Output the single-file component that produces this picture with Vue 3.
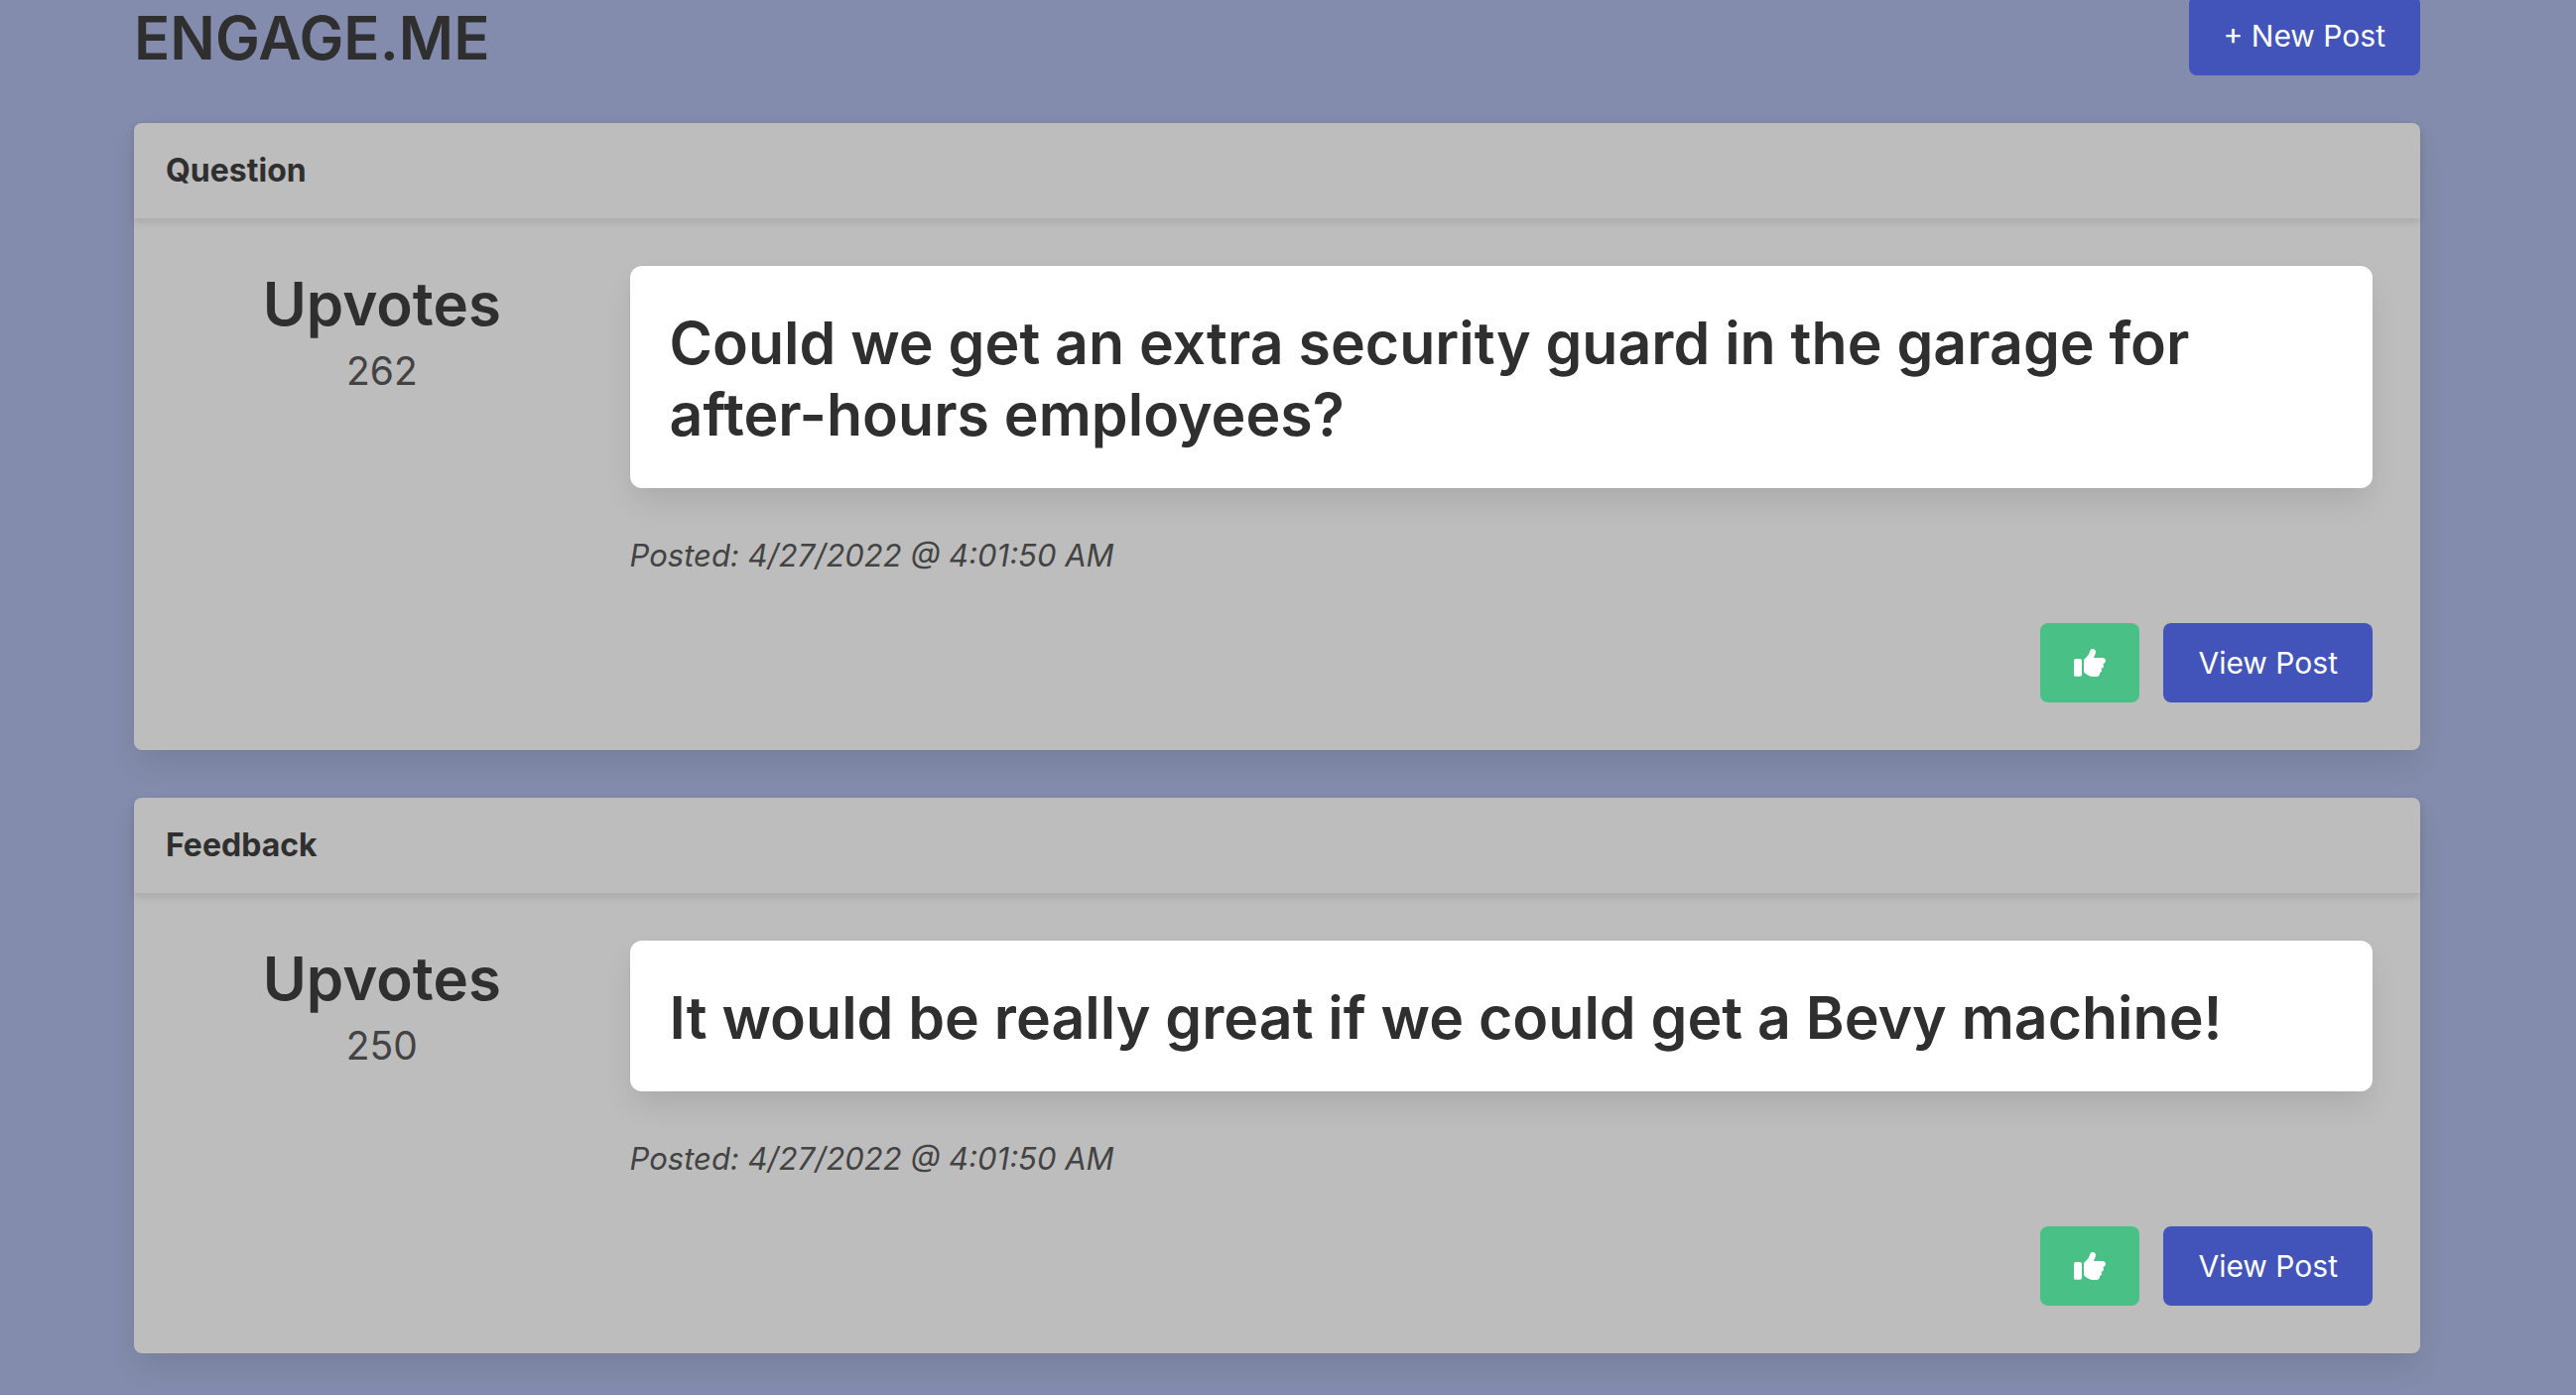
<script setup>
import { ref } from 'vue'

const posts = ref([
  {
    id: 1,
    type: 'Question',
    votes: 262,
    title: 'Could we get an extra security guard in the garage for after-hours employees?',
    posted: '4/27/2022 @ 4:01:50 AM'
  },
  {
    id: 2,
    type: 'Feedback',
    votes: 250,
    title: 'It would be really great if we could get a Bevy machine!',
    posted: '4/27/2022 @ 4:01:50 AM'
  }
])
</script>

<template>
  <main class="page">
    <div class="container">
      <header class="topbar">
        <h1 class="heading">ENGAGE.ME</h1>
        <button class="button primary" type="button">+ New Post</button>
      </header>

      <article v-for="post in posts" :key="post.id" class="card">
        <header class="card-header">{{ post.type }}</header>
        <div class="card-content">
          <section class="votes">
            <h2 class="heading">Upvotes</h2>
            <p class="count">{{ post.votes }}</p>
          </section>
          <section class="body">
            <div class="box">
              <h2 class="heading title">{{ post.title }}</h2>
            </div>
            <p class="posted">Posted: {{ post.posted }}</p>
            <div class="actions">
              <button class="button success" type="button" aria-label="Upvote" @click="post.votes++">
                <svg class="icon" viewBox="0 0 512 512" aria-hidden="true">
                  <path d="M128 447.1V223.1c0-17.67-14.33-31.1-32-31.1H32c-17.67 0-32 14.33-32 31.1v223.1c0 17.67 14.33 31.1 32 31.1h64C113.7 479.1 128 465.6 128 447.1zM512 224.1c0-26.5-21.48-47.98-48-47.98h-146.5c22.77-37.91 34.52-80.88 34.52-96.02C352 56.52 333.5 32 302.5 32c-63.13 0-26.36 76.15-108.2 141.6L178 186.6C166.2 196.1 160.2 210 160.1 224c-.0234 .0234 0 0 0 0L160 384c0 15.1 7.113 29.33 19.2 38.39l34.14 25.59C241 468.8 274.7 480 309.3 480H368c26.52 0 48-21.47 48-47.98c0-3.635-.4805-7.143-1.246-10.55C434 415.2 448 397.4 448 376c0-9.148-2.697-17.61-7.139-24.88C463.1 347 480 327.5 480 304.1c0-12.5-4.893-23.78-12.72-32.32C492.2 270.1 512 249.5 512 224.1z" />
                </svg>
              </button>
              <button class="button primary" type="button">View Post</button>
            </div>
          </section>
        </div>
      </article>
    </div>
  </main>
</template>

<style>
body {
  background: #848cad;
}
</style>

<style scoped>
.page {
  box-sizing: border-box;
  min-height: 100vh;
  padding-right: 22px;
  overflow: hidden;
  background: #848cad;
  color: #434343;
  font-family: Inter, "Liberation Sans", sans-serif;
  font-size: 32px;
  line-height: 48px;
}

.container {
  width: 90%;
  max-width: 2304px;
  margin: -4px auto 40px;
}

.topbar {
  display: flex;
  align-items: center;
  justify-content: space-between;
}

.heading {
  margin: 0 0 -2px;
  padding-top: 2px;
  color: #2f2f2f;
  font-size: 60px;
  font-weight: 600;
  line-height: 72px;
}

.title {
  font-size: 59px;
}

.button {
  display: inline-flex;
  align-items: center;
  justify-content: center;
  height: 80px;
  padding: 0 35px;
  border: 0;
  border-radius: 8px;
  color: #fff;
  font: inherit;
  font-size: 30px;
  cursor: pointer;
}

.primary {
  background: #4254ba;
}

.success {
  padding: 0 34px;
  background: #48c086;
}

.icon {
  width: 32px;
  height: 32px;
  fill: currentColor;
}

.card {
  margin-top: 48px;
  border-radius: 8px;
  background: #bdbdbd;
  box-shadow: 0 16px 32px -4px rgba(10, 10, 10, 0.1), 0 0 0 1px rgba(10, 10, 10, 0.02);
}

.card-header {
  padding: 24px 32px;
  box-shadow: 0 4px 8px rgba(10, 10, 10, 0.1);
  color: #2f2f2f;
  font-weight: 700;
}

.card-content {
  display: flex;
  gap: 48px;
  padding: 48px;
}

.votes {
  flex: 0 0 calc(20% - 38px);
  text-align: center;
}

.count {
  margin: 0;
  font-size: 39px;
  line-height: 68px;
}

.body {
  flex: 1;
}

.box {
  padding: 40px;
  border-radius: 12px;
  background: #fff;
  box-shadow: 0 16px 32px -4px rgba(10, 10, 10, 0.1), 0 0 0 1px rgba(10, 10, 10, 0.02);
}

.posted {
  margin: 44px 0;
  font-size: 31px;
  font-style: italic;
}

.actions {
  display: flex;
  justify-content: flex-end;
  gap: 24px;
}
</style>
